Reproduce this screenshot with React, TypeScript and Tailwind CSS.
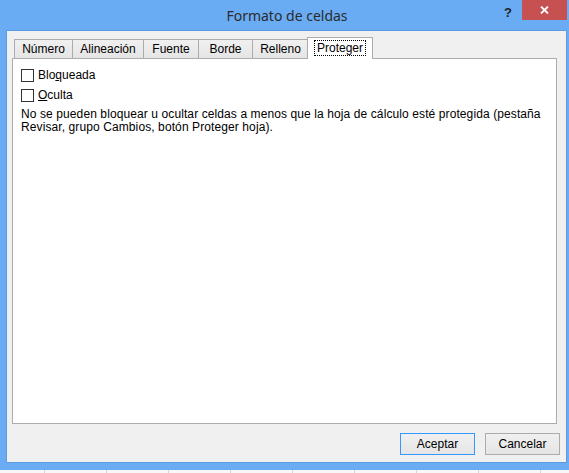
import React from "react";

const tabs = [
  { label: "Número", w: "w-[58px]" },
  { label: "Alineación", w: "w-[71px]" },
  { label: "Fuente", w: "w-[55px]" },
  { label: "Borde", w: "w-[54px]" },
  { label: "Relleno", w: "w-[57px] border-r" },
];

const gridLines = [44, 106, 168, 230, 292, 354, 416, 478, 540];

function Checkbox({ children }: { children: React.ReactNode }) {
  return (
    <label className="flex items-center h-[13px] gap-[4px]">
      <span className="w-[13px] h-[13px] border border-[#333333] bg-white shrink-0" />
      <span className="leading-[13px]">{children}</span>
    </label>
  );
}

export default function App() {
  return (
    <div
      className="w-[569px] h-[473px] bg-[#6aacf4] flex flex-col overflow-hidden text-black"
      style={{ fontFamily: '"Liberation Sans", Arial, sans-serif' }}
    >
      {/* title bar */}
      <div className="relative h-[30px] shrink-0 flex items-center justify-center">
        <span
          className="text-[14px] text-[#2b2b2b] pl-[5px]"
          style={{ fontFamily: '"Noto Sans", sans-serif' }}
        >
          Formato de celdas
        </span>
        <span className="absolute left-[504px] top-[3px] text-[13px] font-bold text-[#222]">?</span>
        <div className="absolute left-[522px] top-0 w-[45px] h-[20px] bg-[#c75050] flex items-center justify-center">
          <svg width="9" height="8" viewBox="0 0 9 8">
            <path d="M1 0.5 L8 7.5 M8 0.5 L1 7.5" stroke="white" strokeWidth="1.8" />
          </svg>
        </div>
      </div>

      {/* client area */}
      <div className="ml-[6px] mr-[2px] h-[433px] shrink-0 border border-[#5a9be3] bg-[#f0f0f0] flex flex-col text-[12px]">
        <div className="flex items-end h-[21px] mt-[6px] ml-[7px]">
          {tabs.map((t) => (
            <div
              key={t.label}
              className={`${t.w} h-[19px] border-l border-t border-[#acacac] bg-gradient-to-b from-[#f0f0f0] to-[#e5e5e5] flex items-center justify-center`}
            >
              {t.label}
            </div>
          ))}
          <div className="relative z-10 -ml-[2px] w-[66px] h-[22px] -mb-px border-x border-t border-[#acacac] bg-white flex items-start justify-center pt-[2px]">
            <span className="border border-dotted border-black px-[2px] leading-[14px]">Proteger</span>
          </div>
        </div>

        <div className="ml-[5px] w-[545px] h-[366px] border border-[#acacac] bg-white pl-[8px] pt-[10px] flex flex-col">
          <div className="flex flex-col gap-[7px]">
            <Checkbox>
              Blo<span className="underline">q</span>ueada
            </Checkbox>
            <Checkbox>
              <span className="underline">O</span>culta
            </Checkbox>
          </div>
          <p className="mt-[6px] leading-[13px] w-[530px] tracking-[0.1px]">
            No se pueden bloquear u ocultar celdas a menos que la hoja de cálculo esté protegida (pestaña Revisar,
            grupo Cambios, botón Proteger hoja).
          </p>
        </div>

        <div className="flex justify-end gap-[10px] mt-[9px] mr-[6px]">
          <button className="w-[75px] h-[22px] border border-[#3399ff] bg-gradient-to-b from-[#f0f0f0] to-[#e5e5e5] text-[12px]">
            Aceptar
          </button>
          <button className="w-[75px] h-[22px] border border-[#acacac] bg-gradient-to-b from-[#f0f0f0] to-[#e5e5e5] text-[12px]">
            Cancelar
          </button>
        </div>
      </div>

      {/* sheet grid behind the window */}
      <div className="mt-[7px] flex-1 bg-[#f7f7f7] flex">
        {gridLines.map((x, i) => (
          <div
            key={x}
            className="h-full w-px bg-[#d4d4d4]"
            style={{ marginLeft: i === 0 ? x : 61 }}
          />
        ))}
      </div>
    </div>
  );
}
